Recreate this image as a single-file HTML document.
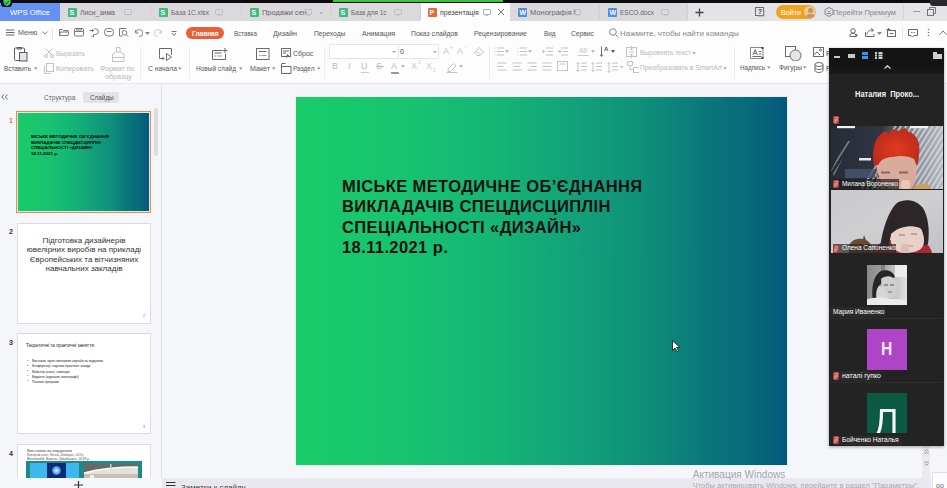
<!DOCTYPE html>
<html><head><meta charset="utf-8"><style>
*{margin:0;padding:0;box-sizing:border-box}
html,body{width:947px;height:488px;overflow:hidden;background:#f5f6fa;font-family:"Liberation Sans",sans-serif;color:#333;position:relative}
.a{position:absolute}
.t{position:absolute;white-space:nowrap;line-height:1}
.ic{position:absolute;top:7px;width:9px;height:10px;border-radius:1px;color:#fff;font-size:8px;font-weight:bold;text-align:center;line-height:10px}
.ic.s{background:#3fbb80}.ic.p{background:#ea6540}.ic.w{background:#4d8ce8}
.mon{position:absolute;top:8px;width:8px;height:6px;border:1px solid #c4c4c8;border-radius:1px}
.stxt{position:absolute;left:46px;font-weight:bold;font-size:16.5px;color:#111;letter-spacing:0.4px;white-space:nowrap;line-height:1}
</style></head><body>
<div class="a" style="left:0px;top:0px;width:947px;height:3px;background:#0c0c0c;"></div>
<div class="a" style="left:333px;top:0px;width:170px;height:2px;background:#3cc43c;"></div>
<div class="a" style="left:0px;top:3px;width:947px;height:18px;background:#e4e3e8;"></div>
<div class="a" style="left:0px;top:3px;width:60px;height:18px;background:#6690f2;"></div>
<div class="a" style="left:1px;top:0px;width:11px;height:7px;background:#0a1428;border-radius:0 0 3px 3px"></div>
<svg class="a" style="left:2.5px;top:0px;" width="8" height="6" viewBox="0 0 8 6" fill="none" stroke="#666" stroke-width="1"><path d="M0.5 0H7.5V2.5C7.5 4 5.5 5.5 4 6C2.5 5.5 0.5 4 0.5 2.5Z" fill="#3ccf5a" stroke="none"/><path d="M2 2.5L3.5 3.8 6 1" stroke="#0a4a1a" stroke-width="1" fill="none"/></svg>
<div class="t" style="left:10px;top:9.04px;font-size:7.2px;color:#fff;font-weight:normal;transform:scale(1.0789,1.0000);transform-origin:0 0;">WPS Office</div>
<div class="a" style="left:60px;top:3px;width:91px;height:18px;background:#dbd9de;"></div>
<div class="a" style="left:150px;top:5px;width:1px;height:14px;background:#cfcfd4;"></div>
<div class="a" style="left:151px;top:3px;width:91px;height:18px;background:#dbd9de;"></div>
<div class="a" style="left:241px;top:5px;width:1px;height:14px;background:#cfcfd4;"></div>
<div class="a" style="left:242px;top:3px;width:89px;height:18px;background:#dbd9de;"></div>
<div class="a" style="left:330px;top:5px;width:1px;height:14px;background:#cfcfd4;"></div>
<div class="a" style="left:331px;top:3px;width:90px;height:18px;background:#dbd9de;"></div>
<div class="a" style="left:420px;top:5px;width:1px;height:14px;background:#cfcfd4;"></div>
<div class="a" style="left:510px;top:3px;width:90px;height:18px;background:#dbd9de;"></div>
<div class="a" style="left:599px;top:5px;width:1px;height:14px;background:#cfcfd4;"></div>
<div class="a" style="left:600px;top:3px;width:88px;height:18px;background:#dbd9de;"></div>
<div class="a" style="left:687px;top:5px;width:1px;height:14px;background:#cfcfd4;"></div>
<div class="a" style="left:68px;top:8px;width:9px;height:9px;background:#3fbb80;border-radius:1px"></div>
<div class="t" style="left:69.5px;top:9.14px;font-size:7px;color:#fff;font-weight:bold;">S</div>
<div class="t" style="left:80px;top:9.04px;font-size:7.2px;color:#666;font-weight:normal;transform:scale(0.9550,1.0000);transform-origin:0 0;">Лиси_зима</div>
<svg class="a" style="left:124px;top:9px;" width="8" height="7" viewBox="0 0 8 7" fill="none" stroke="#c0c0c4" stroke-width="1"><rect x="0.5" y="0.5" width="7" height="5" rx="0.5"/><path d="M4 5.5v1.5M2.5 7h3"/></svg>
<div class="a" style="left:159px;top:8px;width:9px;height:9px;background:#3fbb80;border-radius:1px"></div>
<div class="t" style="left:160.5px;top:9.14px;font-size:7px;color:#fff;font-weight:bold;">S</div>
<div class="t" style="left:171px;top:9.04px;font-size:7.2px;color:#666;font-weight:normal;transform:scale(0.9144,1.0000);transform-origin:0 0;">База 1С.xlsx</div>
<svg class="a" style="left:215px;top:9px;" width="8" height="7" viewBox="0 0 8 7" fill="none" stroke="#c0c0c4" stroke-width="1"><rect x="0.5" y="0.5" width="7" height="5" rx="0.5"/><path d="M4 5.5v1.5M2.5 7h3"/></svg>
<div class="a" style="left:250px;top:8px;width:9px;height:9px;background:#3fbb80;border-radius:1px"></div>
<div class="t" style="left:251.5px;top:9.14px;font-size:7px;color:#fff;font-weight:bold;">S</div>
<div class="t" style="left:262px;top:9.04px;font-size:7.2px;color:#666;font-weight:normal;transform:scale(1.0310,1.0000);transform-origin:0 0;width:47px;overflow:hidden;">Продажи сен</div>
<svg class="a" style="left:304px;top:9px;" width="8" height="7" viewBox="0 0 8 7" fill="none" stroke="#c0c0c4" stroke-width="1"><rect x="0.5" y="0.5" width="7" height="5" rx="0.5"/><path d="M4 5.5v1.5M2.5 7h3"/></svg>
<div class="a" style="left:339px;top:8px;width:9px;height:9px;background:#3fbb80;border-radius:1px"></div>
<div class="t" style="left:340.5px;top:9.14px;font-size:7px;color:#fff;font-weight:bold;">S</div>
<div class="t" style="left:351px;top:9.04px;font-size:7.2px;color:#666;font-weight:normal;transform:scale(0.8907,1.0000);transform-origin:0 0;">База для 1с</div>
<svg class="a" style="left:394px;top:9px;" width="8" height="7" viewBox="0 0 8 7" fill="none" stroke="#c0c0c4" stroke-width="1"><rect x="0.5" y="0.5" width="7" height="5" rx="0.5"/><path d="M4 5.5v1.5M2.5 7h3"/></svg>
<div class="a" style="left:518px;top:8px;width:9px;height:9px;background:#4d8ce8;border-radius:1px"></div>
<div class="t" style="left:519.5px;top:9.14px;font-size:7px;color:#fff;font-weight:bold;">W</div>
<div class="t" style="left:530px;top:9.04px;font-size:7.2px;color:#666;font-weight:normal;transform:scale(1.0426,1.0000);transform-origin:0 0;width:48px;overflow:hidden;">Монографія І</div>
<svg class="a" style="left:573px;top:9px;" width="8" height="7" viewBox="0 0 8 7" fill="none" stroke="#c0c0c4" stroke-width="1"><rect x="0.5" y="0.5" width="7" height="5" rx="0.5"/><path d="M4 5.5v1.5M2.5 7h3"/></svg>
<div class="a" style="left:608px;top:8px;width:9px;height:9px;background:#4d8ce8;border-radius:1px"></div>
<div class="t" style="left:609.5px;top:9.14px;font-size:7px;color:#fff;font-weight:bold;">W</div>
<div class="t" style="left:620px;top:9.04px;font-size:7.2px;color:#666;font-weight:normal;transform:scale(0.9039,1.0000);transform-origin:0 0;">ESCO.docx</div>
<svg class="a" style="left:661px;top:9px;" width="8" height="7" viewBox="0 0 8 7" fill="none" stroke="#c0c0c4" stroke-width="1"><rect x="0.5" y="0.5" width="7" height="5" rx="0.5"/><path d="M4 5.5v1.5M2.5 7h3"/></svg>
<div class="a" style="left:421px;top:3px;width:89px;height:18px;background:#fdfdfe;"></div>
<div class="a" style="left:428px;top:8px;width:9px;height:9px;background:#ea6540;border-radius:1px"></div>
<div class="t" style="left:429.5px;top:9.14px;font-size:7px;color:#fff;font-weight:bold;">P</div>
<div class="t" style="left:440px;top:9.04px;font-size:7.2px;color:#444;font-weight:normal;transform:scale(0.9801,1.0000);transform-origin:0 0;">презентація</div>
<svg class="a" style="left:483px;top:9px;" width="8" height="7" viewBox="0 0 8 7" fill="none" stroke="#b0b0b4" stroke-width="1"><rect x="0.5" y="0.5" width="7" height="5" rx="0.5"/><path d="M4 5.5v1.5M2.5 7h3"/></svg>
<svg class="a" style="left:497px;top:8px;" width="8" height="8" viewBox="0 0 8 8" fill="none" stroke="#777" stroke-width="1"><path d="M1 1L7 7M7 1L1 7"/></svg>
<div class="t" style="left:320px;top:9.14px;font-size:7px;color:#aaa;font-weight:normal;">&#8226;</div>
<svg class="a" style="left:695px;top:8px;" width="9" height="9" viewBox="0 0 9 9" fill="none" stroke="#444" stroke-width="1.3"><path d="M4.5 0.5v8M0.5 4.5h8"/></svg>
<svg class="a" style="left:755px;top:7px;" width="10" height="10" viewBox="0 0 10 10" fill="none" stroke="#6a6a6a" stroke-width="1"><rect x="0.5" y="0.5" width="8" height="8"/><path d="M9 3v6H3" stroke="#999"/></svg>
<div class="t" style="left:758px;top:9.18px;font-size:6.5px;color:#333;font-weight:bold;">?</div>
<div class="a" style="left:776px;top:5px;width:40px;height:14px;background:#f0a31e;border-radius:7px"></div>
<div class="t" style="left:781px;top:8.70px;font-size:7.5px;color:#fff;font-weight:normal;transform:scale(0.9530,1.0000);transform-origin:0 0;">Войти</div>
<div class="a" style="left:804px;top:6px;width:12px;height:12px;border-radius:6px;background:#e8c8a0;overflow:hidden"><div class="a" style="left:3.5px;top:2px;width:5px;height:5px;border-radius:3px;background:#c9925c"></div><div class="a" style="left:1.5px;top:7.5px;width:9px;height:6px;border-radius:4px 4px 0 0;background:#c9925c"></div></div>
<svg class="a" style="left:824px;top:7px;" width="10" height="10" viewBox="0 0 10 10" fill="none" stroke="#888" stroke-width="1"><path d="M5 0.5L9 2.5V7L5 9.5L1 7V2.5Z"/><path d="M3 6.5h4M3.5 4l1.5 1 1.5-1"/></svg>
<div class="t" style="left:833px;top:9.04px;font-size:7.2px;color:#888;font-weight:normal;transform:scale(1.0302,1.0000);transform-origin:0 0;">Перейти Премиум</div>
<div class="a" style="left:903px;top:5px;width:1px;height:14px;background:#d4d4d8;"></div>
<svg class="a" style="left:913px;top:11px;" width="7" height="1" viewBox="0 0 7 1" fill="none" stroke="#999" stroke-width="1"><path d="M0 0.5h7"/></svg>
<svg class="a" style="left:927px;top:7px;" width="9" height="9" viewBox="0 0 9 9" fill="none" stroke="#777" stroke-width="1"><rect x="0.5" y="2.5" width="6" height="6"/><path d="M2.5 2.5V0.5h6v6h-2"/></svg>
<div class="a" style="left:930px;top:0px;width:17px;height:6px;background:#2a2a2a;border-radius:0 0 0 3px"></div>
<div class="a" style="left:0px;top:21px;width:947px;height:63px;background:#fdfdfe;"></div>
<div class="a" style="left:0px;top:83px;width:947px;height:1px;background:#e6e6ea;"></div>
<svg class="a" style="left:5.5px;top:29px;" width="9" height="7" viewBox="0 0 9 7" fill="none" stroke="#666" stroke-width="1"><path d="M0 1h8.5M0 3.5h8.5M0 6h8.5"/></svg>
<div class="t" style="left:17.7px;top:29.24px;font-size:7.2px;color:#555;font-weight:normal;transform:scale(0.9919,1.0000);transform-origin:0 0;">Меню</div>
<svg class="a" style="left:42px;top:31px;" width="6" height="4" viewBox="0 0 6 4" fill="none" stroke="#888" stroke-width="1"><path d="M0.5 0.5L3 3L5.5 0.5"/></svg>
<div class="a" style="left:52px;top:28px;width:1px;height:11px;background:#e2e2e6;"></div>
<svg class="a" style="left:58.5px;top:29px;" width="10" height="8" viewBox="0 0 10 8" fill="none" stroke="#7a7a7a" stroke-width="1"><path d="M0.5 6.5V0.5h3l1 1h4.5v1.5"/><path d="M0.5 6.5l1-3.5h8.5l-1 3.5z"/></svg>
<svg class="a" style="left:73.5px;top:28px;" width="10" height="9" viewBox="0 0 10 9" fill="none" stroke="#7a7a7a" stroke-width="1"><rect x="0.5" y="0.5" width="9" height="7.5" rx="1"/><path d="M0.5 3.5h9M2.5 0.5v1.5h5V0.5"/></svg>
<svg class="a" style="left:89px;top:28px;" width="10" height="9" viewBox="0 0 10 9" fill="none" stroke="#7a7a7a" stroke-width="1"><path d="M0.5 2.5h4M3 1l1.5 1.5L3 4"/><path d="M5 0.8h1.5a2.8 2.8 0 0 1 0 5.6H4.5v2.5c-1 0-1.8-.3-1.8-1.2"/></svg>
<svg class="a" style="left:103.5px;top:28px;" width="10" height="9" viewBox="0 0 10 9" fill="none" stroke="#7a7a7a" stroke-width="1"><rect x="0.5" y="0.5" width="9" height="7.5" rx="3.2"/><path d="M2.5 3.5h5"/></svg>
<svg class="a" style="left:118.5px;top:28px;" width="10" height="9" viewBox="0 0 10 9" fill="none" stroke="#7a7a7a" stroke-width="1"><path d="M7.5 0.5h-7v7.5h3"/><circle cx="5.5" cy="4.8" r="2.3"/><path d="M7.2 6.5L9 8.5"/></svg>
<svg class="a" style="left:134px;top:29px;" width="9" height="8" viewBox="0 0 9 8" fill="none" stroke="#888" stroke-width="1"><path d="M1.5 1v3h3"/><path d="M1.8 4A3.5 3.5 0 1 1 5 7.5"/></svg>
<svg class="a" style="left:145px;top:32px;" width="5" height="3" viewBox="0 0 5 3" fill="none" stroke="#666" stroke-width="1"><path d="M0 0h5L2.5 3z" fill="#888" stroke="none"/></svg>
<svg class="a" style="left:154px;top:29px;" width="9" height="8" viewBox="0 0 9 8" fill="none" stroke="#ccc" stroke-width="1"><path d="M7.5 1v3h-3"/><path d="M7.2 4A3.5 3.5 0 1 0 4 7.5"/></svg>
<svg class="a" style="left:171px;top:31px;" width="6" height="5" viewBox="0 0 6 5" fill="none" stroke="#777" stroke-width="1"><path d="M0.5 0.5h5M1 2l2 2.5L5 2"/></svg>
<div class="a" style="left:186px;top:27px;width:38px;height:12px;background:#e8603a;border-radius:6px"></div>
<div class="t" style="left:191.7px;top:29.54px;font-size:7.2px;color:#fff;font-weight:bold;transform:scale(0.9085,1.0000);transform-origin:0 0;">Главная</div>
<div class="t" style="left:234px;top:29.54px;font-size:7.2px;color:#555;font-weight:normal;transform:scale(0.8595,1.0000);transform-origin:0 0;">Вставка</div>
<div class="t" style="left:273px;top:29.54px;font-size:7.2px;color:#555;font-weight:normal;transform:scale(0.9917,1.0000);transform-origin:0 0;">Дизайн</div>
<div class="t" style="left:313.6px;top:29.54px;font-size:7.2px;color:#555;font-weight:normal;transform:scale(0.9299,1.0000);transform-origin:0 0;">Переходы</div>
<div class="t" style="left:361.8px;top:29.54px;font-size:7.2px;color:#555;font-weight:normal;transform:scale(0.9823,1.0000);transform-origin:0 0;">Анимация</div>
<div class="t" style="left:411px;top:29.54px;font-size:7.2px;color:#555;font-weight:normal;transform:scale(0.9482,1.0000);transform-origin:0 0;">Показ слайдов</div>
<div class="t" style="left:474px;top:29.54px;font-size:7.2px;color:#555;font-weight:normal;transform:scale(0.9534,1.0000);transform-origin:0 0;">Рецензирование</div>
<div class="t" style="left:543.5px;top:29.54px;font-size:7.2px;color:#555;font-weight:normal;transform:scale(0.8829,1.0000);transform-origin:0 0;">Вид</div>
<div class="t" style="left:571px;top:29.54px;font-size:7.2px;color:#555;font-weight:normal;transform:scale(0.9329,1.0000);transform-origin:0 0;">Сервис</div>
<svg class="a" style="left:609px;top:28px;" width="10" height="10" viewBox="0 0 10 10" fill="none" stroke="#888" stroke-width="1"><circle cx="4" cy="4" r="3.3"/><path d="M6.5 6.5L9.5 9.5"/></svg>
<div class="t" style="left:620px;top:29.54px;font-size:7.2px;color:#888;font-weight:normal;transform:scale(1.1086,1.0000);transform-origin:0 0;">Нажмите, чтобы найти команды</div>
<svg class="a" style="left:849px;top:28px;" width="9" height="9" viewBox="0 0 9 9" fill="none" stroke="#6a6a6a" stroke-width="1"><circle cx="4" cy="3" r="2.3"/><path d="M0.8 8.5c0-2.5 1.5-3.5 3.2-3.5s3.2 1 3.2 3.5z"/><path d="M7.5 6v2.5M6.3 7.2h2.4"/></svg>
<svg class="a" style="left:865px;top:28px;" width="10" height="9" viewBox="0 0 10 9" fill="none" stroke="#6a6a6a" stroke-width="1"><path d="M0.5 4v4.5h8.5V6"/><path d="M2 6.5c0-3 2.5-4.5 6-4.5M6 0.5L8.5 2 6.5 4"/></svg>
<svg class="a" style="left:877px;top:32px;" width="5" height="3" viewBox="0 0 5 3" fill="none" stroke="#666" stroke-width="1"><path d="M0 0h5L2.5 3z" fill="#888" stroke="none"/></svg>
<svg class="a" style="left:886px;top:28px;" width="10" height="9" viewBox="0 0 10 9" fill="none" stroke="#6a6a6a" stroke-width="1"><path d="M0.5 1.5h4M2.5 0v3"/><rect x="1.5" y="2.5" width="8" height="6"/><path d="M3.5 5.5h4"/></svg>
<div class="a" style="left:901.5px;top:27px;width:1px;height:12px;background:#e4e4e8;"></div>
<svg class="a" style="left:908px;top:29px;" width="10" height="8" viewBox="0 0 10 8" fill="none" stroke="#666" stroke-width="1"><path d="M0.5 0.5h9v6H6L4.5 8 3 6.5H0.5z"/><path d="M3 3.5h.8M4.6 3.5h.8M6.2 3.5h.8"/></svg>
<svg class="a" style="left:927px;top:28px;" width="3" height="9" viewBox="0 0 3 9" fill="none" stroke="none" stroke-width="1"><circle cx="1.5" cy="1.5" r="0.8" fill="#777"/><circle cx="1.5" cy="4.5" r="0.8" fill="#777"/><circle cx="1.5" cy="7.5" r="0.8" fill="#777"/></svg>
<svg class="a" style="left:939px;top:30px;" width="8" height="5" viewBox="0 0 8 5" fill="none" stroke="#777" stroke-width="1"><path d="M0.5 4.5L4 1L7.5 4.5"/></svg>
<svg class="a" style="left:14px;top:46.5px;" width="14" height="15" viewBox="0 0 14 15" fill="none" stroke="#5a5a5a" stroke-width="1"><rect x="0.5" y="1" width="10" height="12.5" rx="1"/><path d="M3 1.5V0.5h4.5v1.5h-4.5"/><rect x="5.5" y="5.5" width="7.5" height="8.5" fill="#e4e4ee"/></svg>
<div class="t" style="left:4px;top:65.24px;font-size:7.2px;color:#555;font-weight:normal;transform:scale(0.8847,1.0000);transform-origin:0 0;">Вставить</div>
<svg class="a" style="left:33.5px;top:67px;" width="4" height="3" viewBox="0 0 4 3" fill="none" stroke="#666" stroke-width="1"><path d="M0 0.5h3.5L1.75 2.7z" fill="#888" stroke="none"/></svg>
<svg class="a" style="left:44px;top:48px;" width="10" height="10" viewBox="0 0 10 10" fill="none" stroke="#c2c2c2" stroke-width="1"><path d="M1.5 0.5L8 7M8.5 0.5L2 7"/><circle cx="2" cy="8" r="1.5"/><circle cx="8" cy="8" r="1.5"/></svg>
<div class="t" style="left:55.7px;top:49.84px;font-size:7.2px;color:#b8b8b8;font-weight:normal;transform:scale(0.8994,1.0000);transform-origin:0 0;">Вырезать</div>
<svg class="a" style="left:44px;top:63px;" width="10" height="11" viewBox="0 0 10 11" fill="none" stroke="#c2c2c2" stroke-width="1"><rect x="2.5" y="0.5" width="7" height="8"/><path d="M0.5 2.5v8h6"/></svg>
<div class="t" style="left:55.7px;top:65.24px;font-size:7.2px;color:#b8b8b8;font-weight:normal;transform:scale(0.9803,1.0000);transform-origin:0 0;">Копировать</div>
<svg class="a" style="left:112px;top:46.5px;" width="13" height="15" viewBox="0 0 13 15" fill="none" stroke="#c2c2c2" stroke-width="1"><path d="M4.5 5V0.5h3.5V5"/><path d="M4.5 5L0.5 7V14.5h11.5V7L8 5z"/><path d="M0.5 10.5h11.5"/></svg>
<div class="t" style="left:99.6px;top:65.24px;font-size:7.2px;color:#b8b8b8;font-weight:normal;transform:scale(0.9696,1.0000);transform-origin:0 0;">Формат по</div>
<div class="t" style="left:104.7px;top:72.74px;font-size:7.2px;color:#b8b8b8;font-weight:normal;transform:scale(0.9971,1.0000);transform-origin:0 0;">образцу</div>
<div class="a" style="left:140px;top:47px;width:1px;height:32px;background:#ececf0;"></div>
<svg class="a" style="left:158.5px;top:47.5px;" width="14" height="13" viewBox="0 0 14 13" fill="none" stroke="#6a6a6a" stroke-width="1"><path d="M0.5 7.5V0.5h12v6.5"/><path d="M7.5 5.5v7l5-3.5z"/><path d="M0.5 7.5v3h4.5M3.5 9l1.5 1.5L3.5 12"/></svg>
<div class="t" style="left:148px;top:65.24px;font-size:7.2px;color:#555;font-weight:normal;transform:scale(0.9361,1.0000);transform-origin:0 0;">С начала</div>
<svg class="a" style="left:178px;top:67px;" width="4" height="3" viewBox="0 0 4 3" fill="none" stroke="#666" stroke-width="1"><path d="M0 0.5h3.5L1.75 2.7z" fill="#888" stroke="none"/></svg>
<div class="a" style="left:189px;top:47px;width:1px;height:32px;background:#ececf0;"></div>
<svg class="a" style="left:211.5px;top:47.5px;" width="16" height="12" viewBox="0 0 16 12" fill="none" stroke="#6a6a6a" stroke-width="1"><path d="M10 2.5H0.5v9h13V6"/><path d="M2.5 5h7"/><path d="M2.5 8h1.5M5 8h5" stroke="#999"/><path d="M13 0v5M10.5 2.5h5"/></svg>
<div class="t" style="left:196px;top:65.24px;font-size:7.2px;color:#555;font-weight:normal;transform:scale(0.9039,1.0000);transform-origin:0 0;">Новый слайд</div>
<svg class="a" style="left:239px;top:67px;" width="4" height="3" viewBox="0 0 4 3" fill="none" stroke="#666" stroke-width="1"><path d="M0 0.5h3.5L1.75 2.7z" fill="#888" stroke="none"/></svg>
<svg class="a" style="left:255.5px;top:48px;" width="14" height="12" viewBox="0 0 14 12" fill="none" stroke="#6a6a6a" stroke-width="1"><rect x="0.5" y="0.5" width="12.5" height="11"/><path d="M3 3.5h7.5"/><path d="M3 7.5h1.5M5.5 7.5h5" stroke="#999"/></svg>
<div class="t" style="left:249.8px;top:65.24px;font-size:7.2px;color:#555;font-weight:normal;transform:scale(0.9815,1.0000);transform-origin:0 0;">Макет</div>
<svg class="a" style="left:272px;top:67px;" width="4" height="3" viewBox="0 0 4 3" fill="none" stroke="#666" stroke-width="1"><path d="M0 0.5h3.5L1.75 2.7z" fill="#888" stroke="none"/></svg>
<svg class="a" style="left:281px;top:48px;" width="10" height="10" viewBox="0 0 10 10" fill="none" stroke="#6a6a6a" stroke-width="1"><rect x="0.5" y="0.5" width="9" height="8"/><path d="M2 3h6M2 5h3"/><path d="M5 9.5l1.5-2.5 2 2" stroke-width="1.2"/></svg>
<div class="t" style="left:292.6px;top:49.84px;font-size:7.2px;color:#555;font-weight:normal;transform:scale(0.9746,1.0000);transform-origin:0 0;">Сброс</div>
<svg class="a" style="left:281px;top:63px;" width="11" height="11" viewBox="0 0 11 11" fill="none" stroke="#6a6a6a" stroke-width="1"><path d="M0.5 0.5h4M0.5 2.5v0"/><path d="M0.5 3.5h9.5v7H0.5z"/><path d="M0.5 1v2.5"/></svg>
<div class="t" style="left:293px;top:65.24px;font-size:7.2px;color:#555;font-weight:normal;transform:scale(0.9035,1.0000);transform-origin:0 0;">Раздел</div>
<svg class="a" style="left:317px;top:67px;" width="4" height="3" viewBox="0 0 4 3" fill="none" stroke="#666" stroke-width="1"><path d="M0 0.5h3.5L1.75 2.7z" fill="#888" stroke="none"/></svg>
<div class="a" style="left:324px;top:47px;width:1px;height:32px;background:#ececf0;"></div>
<div class="a" style="left:328.5px;top:44px;width:70px;height:14.5px;background:#fff;border:1px solid #e4e4e8"></div>
<div class="a" style="left:398px;top:44px;width:41px;height:14.5px;background:#fff;border:1px solid #e4e4e8"></div>
<svg class="a" style="left:392px;top:51px;" width="4" height="2" viewBox="0 0 4 2" fill="none" stroke="#666" stroke-width="1"><path d="M0 0h4L2 2z" fill="#aaa" stroke="none"/></svg>
<svg class="a" style="left:433px;top:51px;" width="4" height="2" viewBox="0 0 4 2" fill="none" stroke="#666" stroke-width="1"><path d="M0 0h4L2 2z" fill="#aaa" stroke="none"/></svg>
<div class="t" style="left:400px;top:48.14px;font-size:7px;color:#444;font-weight:normal;">0</div>
<div class="t" style="left:443px;top:47.18px;font-size:9px;color:#c4c4c4;font-weight:normal;">A</div>
<div class="t" style="left:449.5px;top:45.10px;font-size:10.0px;color:#c4c4c4;font-weight:normal;transform:scale(0.5000,0.5000);transform-origin:0 0;">+</div>
<div class="t" style="left:457px;top:47.18px;font-size:9px;color:#c4c4c4;font-weight:normal;">A</div>
<div class="t" style="left:463.5px;top:45.10px;font-size:10.0px;color:#c4c4c4;font-weight:normal;transform:scale(0.5000,0.5000);transform-origin:0 0;">-</div>
<svg class="a" style="left:474px;top:47px;" width="10" height="9" viewBox="0 0 10 9" fill="none" stroke="#c2c2c2" stroke-width="1"><path d="M5 0.5L9.5 5 6 8.5H3L0.5 6z"/><path d="M2.5 4L6 7.5"/></svg>
<div class="t" style="left:332px;top:62.28px;font-size:9px;color:#bbb;font-weight:normal;">B</div>
<div class="t" style="left:348px;top:62.28px;font-size:9px;color:#bbb;font-weight:normal;font-style:italic">I</div>
<div class="t" style="left:361px;top:62.28px;font-size:9px;color:#bbb;font-weight:normal;">U</div>
<div class="a" style="left:361px;top:72px;width:8px;height:1px;background:#ccc;"></div>
<div class="t" style="left:376px;top:62.28px;font-size:9px;color:#bbb;font-weight:normal;">S</div>
<div class="a" style="left:375.5px;top:66px;width:8px;height:1px;background:#bbb;"></div>
<div class="t" style="left:391px;top:62.28px;font-size:9px;color:#bbb;font-weight:normal;">A</div>
<div class="a" style="left:390.5px;top:71.5px;width:8px;height:2px;background:#999;"></div>
<svg class="a" style="left:401px;top:65px;" width="4" height="3" viewBox="0 0 4 3" fill="none" stroke="#666" stroke-width="1"><path d="M0 0h4L2 3z" fill="#bbb" stroke="none"/></svg>
<div class="t" style="left:411px;top:62.28px;font-size:9px;color:#ccc;font-weight:normal;">X</div>
<div class="t" style="left:417.5px;top:59.60px;font-size:10.0px;color:#ccc;font-weight:normal;transform:scale(0.5000,0.5000);transform-origin:0 0;">2</div>
<div class="t" style="left:426px;top:62.28px;font-size:9px;color:#ccc;font-weight:normal;">X</div>
<div class="t" style="left:432.5px;top:67.60px;font-size:10.0px;color:#ccc;font-weight:normal;transform:scale(0.5000,0.5000);transform-origin:0 0;">2</div>
<svg class="a" style="left:446px;top:61px;" width="12" height="12" viewBox="0 0 12 12" fill="none" stroke="#c2c2c2" stroke-width="1"><path d="M2 8L7.5 2.5 10 5 4.5 10.5H2z"/><path d="M0.5 11.5h11"/></svg>
<svg class="a" style="left:459px;top:65px;" width="4" height="3" viewBox="0 0 4 3" fill="none" stroke="#666" stroke-width="1"><path d="M0 0h4L2 3z" fill="#bbb" stroke="none"/></svg>
<div class="a" style="left:489px;top:47px;width:1px;height:32px;background:#ececf0;"></div>
<svg class="a" style="left:494px;top:47px;" width="10" height="9" viewBox="0 0 10 9" fill="none" stroke="#c2c2c2" stroke-width="1"><path d="M3 1h7M3 4.5h7M3 8h7"/><path d="M0.5 1h1M0.5 4.5h1M0.5 8h1"/></svg>
<svg class="a" style="left:505px;top:50px;" width="4" height="3" viewBox="0 0 4 3" fill="none" stroke="#666" stroke-width="1"><path d="M0 0h4L2 3z" fill="#bbb" stroke="none"/></svg>
<svg class="a" style="left:517px;top:47px;" width="10" height="9" viewBox="0 0 10 9" fill="none" stroke="#c2c2c2" stroke-width="1"><path d="M3 1h7M3 4.5h7M3 8h7"/><path d="M0.5 1h1M0.5 4.5h1M0.5 8h1"/></svg>
<svg class="a" style="left:528px;top:50px;" width="4" height="3" viewBox="0 0 4 3" fill="none" stroke="#666" stroke-width="1"><path d="M0 0h4L2 3z" fill="#bbb" stroke="none"/></svg>
<svg class="a" style="left:542px;top:47px;" width="11" height="9" viewBox="0 0 11 9" fill="none" stroke="#c2c2c2" stroke-width="1"><path d="M4 1h7M6 4.5h5M4 8h7"/><path d="M3 4.5H0.5M2 3L0.5 4.5 2 6"/></svg>
<svg class="a" style="left:557px;top:47px;" width="11" height="9" viewBox="0 0 11 9" fill="none" stroke="#c2c2c2" stroke-width="1"><path d="M4 1h7M6 4.5h5M4 8h7"/><path d="M0.5 4.5H4M2.5 3L4 4.5 2.5 6"/></svg>
<div class="t" style="left:579px;top:48.38px;font-size:6.5px;color:#c8c8c8;font-weight:normal;">AB</div>
<div class="a" style="left:578px;top:55px;width:11px;height:1px;background:#ccc;"></div>
<svg class="a" style="left:591px;top:50px;" width="4" height="3" viewBox="0 0 4 3" fill="none" stroke="#666" stroke-width="1"><path d="M0 0h4L2 3z" fill="#bbb" stroke="none"/></svg>
<svg class="a" style="left:600px;top:46px;" width="10" height="12" viewBox="0 0 10 12" fill="none" stroke="#6a6a6a" stroke-width="1"><path d="M1.5 0.5v10M0 8.5l1.5 2 1.5-2"/></svg>
<div class="t" style="left:604px;top:46.12px;font-size:6px;color:#555;font-weight:bold;">A</div>
<svg class="a" style="left:611px;top:50px;" width="4" height="3" viewBox="0 0 4 3" fill="none" stroke="#666" stroke-width="1"><path d="M0 0h4L2 3z" fill="#555" stroke="none"/></svg>
<svg class="a" style="left:626px;top:46px;" width="12" height="12" viewBox="0 0 12 12" fill="none" stroke="#c2c2c2" stroke-width="1"><rect x="0.5" y="1.5" width="10" height="9"/><path d="M5.5 0v4M4 2.5l1.5 1.5L7 2.5M5.5 12V8M4 9.5l1.5-1.5L7 9.5M3 6h5"/></svg>
<div class="t" style="left:640px;top:49.14px;font-size:7.2px;color:#b8b8b8;font-weight:normal;transform:scale(0.9094,1.0000);transform-origin:0 0;">Выровнять текст</div>
<svg class="a" style="left:692px;top:52px;" width="4" height="3" viewBox="0 0 4 3" fill="none" stroke="#666" stroke-width="1"><path d="M0 0h4L2 3z" fill="#bbb" stroke="none"/></svg>
<svg class="a" style="left:497px;top:62px;" width="10" height="9" viewBox="0 0 10 9" fill="none" stroke="#c2c2c2" stroke-width="1"><path d="M0.5 1h9M0.5 4.5h6M0.5 8h9"/></svg>
<svg class="a" style="left:512px;top:62px;" width="10" height="9" viewBox="0 0 10 9" fill="none" stroke="#c2c2c2" stroke-width="1"><path d="M0.5 1h9M2 4.5h6M0.5 8h9"/></svg>
<svg class="a" style="left:527px;top:62px;" width="10" height="9" viewBox="0 0 10 9" fill="none" stroke="#c2c2c2" stroke-width="1"><path d="M0.5 1h9M3.5 4.5h6M0.5 8h9"/></svg>
<svg class="a" style="left:542px;top:62px;" width="10" height="9" viewBox="0 0 10 9" fill="none" stroke="#c2c2c2" stroke-width="1"><path d="M0.5 1h9M0.5 4.5h9M0.5 8h9"/></svg>
<svg class="a" style="left:557px;top:61px;" width="11" height="10" viewBox="0 0 11 10" fill="none" stroke="#c2c2c2" stroke-width="1"><rect x="0.5" y="0.5" width="10" height="9"/><path d="M2.5 3h6"/></svg>
<svg class="a" style="left:576px;top:61.5px;" width="11" height="10" viewBox="0 0 11 10" fill="none" stroke="#c2c2c2" stroke-width="1"><path d="M5 1h6M5 4.5h6M5 8h6M2 0.5v9M0.5 2L2 0.5 3.5 2M0.5 8L2 9.5 3.5 8"/></svg>
<svg class="a" style="left:591px;top:61.5px;" width="11" height="10" viewBox="0 0 11 10" fill="none" stroke="#c2c2c2" stroke-width="1"><path d="M5 1h6M5 4.5h6M5 8h6M2 0.5v9M0.5 2L2 0.5 3.5 2M0.5 8L2 9.5 3.5 8"/></svg>
<svg class="a" style="left:606.5px;top:61.5px;" width="11" height="11" viewBox="0 0 11 11" fill="none" stroke="#c2c2c2" stroke-width="1"><path d="M5 1h6M5 4.5h6M5 8h6M2 0.5v10M0.5 2L2 0.5 3.5 2M0.5 9L2 10.5 3.5 9"/></svg>
<svg class="a" style="left:619.5px;top:65.5px;" width="4" height="3" viewBox="0 0 4 3" fill="none" stroke="#666" stroke-width="1"><path d="M0 0h3.5L1.75 2.5z" fill="#bbb" stroke="none"/></svg>
<svg class="a" style="left:627px;top:61px;" width="12" height="12" viewBox="0 0 12 12" fill="none" stroke="#c2c2c2" stroke-width="1"><path d="M0.5 0.5h5v4h-5zM3 4.5v4h3.5"/><rect x="6.5" y="6.5" width="6" height="5"/></svg>
<div class="t" style="left:640px;top:64.34px;font-size:7.2px;color:#b8b8b8;font-weight:normal;transform:scale(0.9390,1.0000);transform-origin:0 0;">Преобразовать в SmartArt</div>
<svg class="a" style="left:723px;top:67px;" width="4" height="3" viewBox="0 0 4 3" fill="none" stroke="#666" stroke-width="1"><path d="M0 0h4L2 3z" fill="#bbb" stroke="none"/></svg>
<div class="a" style="left:734px;top:47px;width:1px;height:32px;background:#ececf0;"></div>
<svg class="a" style="left:749.5px;top:47px;" width="14" height="12" viewBox="0 0 14 12" fill="none" stroke="#6a6a6a" stroke-width="1"><path d="M0.5 0.5v11M0.5 0.5h12.5M0.5 11.5h12.5M13 0.5v11" stroke="#888"/><path d="M3 8L5.2 2.5 7.4 8M3.8 6.2h2.8M8.8 4.5h2.5M8.8 7h2.5M2.5 9.5h9"/><rect x="11.5" y="0" width="2" height="2" fill="#444" stroke="none"/><rect x="11.5" y="10" width="2" height="2" fill="#444" stroke="none"/></svg>
<div class="t" style="left:740px;top:63.84px;font-size:7.2px;color:#555;font-weight:normal;transform:scale(0.8718,1.0000);transform-origin:0 0;">Надпись</div>
<svg class="a" style="left:767px;top:66px;" width="4" height="3" viewBox="0 0 4 3" fill="none" stroke="#666" stroke-width="1"><path d="M0 0.5h3.5L1.75 2.7z" fill="#888" stroke="none"/></svg>
<svg class="a" style="left:785px;top:46px;" width="17" height="15" viewBox="0 0 17 15" fill="none" stroke="#6a6a6a" stroke-width="1"><rect x="0.5" y="0.5" width="10" height="10"/><circle cx="10.5" cy="9.5" r="5.5" fill="#e4e4ea"/></svg>
<div class="t" style="left:778.8px;top:63.84px;font-size:7.2px;color:#555;font-weight:normal;transform:scale(0.9267,1.0000);transform-origin:0 0;">Фигуры</div>
<svg class="a" style="left:803px;top:66px;" width="4" height="3" viewBox="0 0 4 3" fill="none" stroke="#666" stroke-width="1"><path d="M0 0.5h3.5L1.75 2.7z" fill="#888" stroke="none"/></svg>
<svg class="a" style="left:813px;top:47px;" width="11" height="10" viewBox="0 0 11 10" fill="none" stroke="#6a6a6a" stroke-width="1"><rect x="0.5" y="0.5" width="10" height="9"/><path d="M0.5 8L4 5l3 3"/><circle cx="7.5" cy="3" r="1"/></svg>
<div class="t" style="left:826px;top:49.94px;font-size:7px;color:#444;font-weight:normal;">Р</div>
<svg class="a" style="left:814px;top:62px;" width="10" height="11" viewBox="0 0 10 11" fill="none" stroke="#6a6a6a" stroke-width="1"><ellipse cx="5" cy="2.5" rx="4" ry="2"/><path d="M1 2.5v6c0 1 2 2 4 2s4-1 4-2v-6M1 5.5c0 1 2 2 4 2s4-1 4-2"/></svg>
<div class="t" style="left:826px;top:65.34px;font-size:7px;color:#444;font-weight:normal;">Р</div>
<div class="a" style="left:0px;top:84px;width:161px;height:394px;background:#f5f6fa;"></div>
<div class="a" style="left:161px;top:84px;width:1px;height:394px;background:#e0e0e5;"></div>
<svg class="a" style="left:1px;top:94px;" width="7" height="6" viewBox="0 0 7 6" fill="none" stroke="#666" stroke-width="1"><path d="M3 0.5L0.8 3 3 5.5M6.5 0.5L4.3 3 6.5 5.5"/></svg>
<div class="t" style="left:44px;top:94.04px;font-size:7.2px;color:#666;font-weight:normal;transform:scale(0.9193,1.0000);transform-origin:0 0;">Структура</div>
<div class="a" style="left:83px;top:92px;width:36px;height:11px;background:#e2e2e7;border-radius:2px"></div>
<div class="t" style="left:89.8px;top:94.04px;font-size:7.2px;color:#555;font-weight:normal;transform:scale(0.8843,1.0000);transform-origin:0 0;">Слайды</div>
<div class="a" style="left:154px;top:108px;width:4px;height:48px;background:#dcdce0;border-radius:2px"></div>
<div class="a" style="left:15.5px;top:110.5px;width:135.5px;height:102px;background:#d8f0e4;border:1px solid #e88a58"></div>
<div class="a" style="left:17.5px;top:112.5px;width:131.5px;height:98px;background:linear-gradient(90deg,rgb(25,203,105) 0%,rgb(24,196,112) 21%,rgb(20,180,118) 41.5%,rgb(17,155,122) 62%,rgb(14,142,122) 72%,rgb(10,122,122) 82%,rgb(8,105,122) 92.5%,rgb(5,88,125) 100%);"></div>
<div class="t" style="left:9px;top:117.24px;font-size:7px;color:#e8763f;font-weight:bold;">1</div>
<div class="t" style="left:31px;top:134.39px;font-size:10.0px;color:#000;font-weight:bold;transform:scale(0.4400,0.4400);transform-origin:0 0;letter-spacing:0.05px">МІСЬКЕ МЕТОДИЧНЕ ОБ’ЄДНАННЯ</div>
<div class="t" style="left:31px;top:139.84px;font-size:10.0px;color:#000;font-weight:bold;transform:scale(0.4400,0.4400);transform-origin:0 0;letter-spacing:0.05px">ВИКЛАДАЧІВ СПЕЦДИСЦИПЛІН</div>
<div class="t" style="left:31px;top:145.29px;font-size:10.0px;color:#000;font-weight:bold;transform:scale(0.4400,0.4400);transform-origin:0 0;letter-spacing:0.05px">СПЕЦІАЛЬНОСТІ «ДИЗАЙН»</div>
<div class="t" style="left:31px;top:150.74px;font-size:10.0px;color:#000;font-weight:bold;transform:scale(0.4400,0.4400);transform-origin:0 0;letter-spacing:0.05px">18.11.2021 р.</div>
<div class="a" style="left:16.5px;top:222.5px;width:134px;height:101px;background:#ffffff;border:1px solid #dcdce0"></div>
<div class="t" style="left:9px;top:228.34px;font-size:7px;color:#333;font-weight:bold;">2</div>
<div class="t" style="left:17px;width:134px;text-align:center;top:236.90px;font-size:8px;color:#333">Підготовка дизайнерів</div>
<div class="t" style="left:17px;width:134px;text-align:center;top:246.35px;font-size:8px;color:#333">ювелірних виробів на прикладі</div>
<div class="t" style="left:17px;width:134px;text-align:center;top:255.80px;font-size:8px;color:#333">Європейських та вітчизняних</div>
<div class="t" style="left:17px;width:134px;text-align:center;top:265.25px;font-size:8px;color:#333">навчальних закладів</div>
<div class="t" style="left:142.5px;top:314.32px;font-size:10.0px;color:#666;font-weight:normal;transform:scale(0.3500,0.3500);transform-origin:0 0;">2</div>
<div class="a" style="left:16.5px;top:333px;width:134px;height:100.5px;background:#ffffff;border:1px solid #dcdce0"></div>
<div class="t" style="left:9px;top:339.34px;font-size:7px;color:#333;font-weight:bold;">3</div>
<div class="t" style="left:26px;top:343.02px;font-size:10.0px;color:#222;font-weight:normal;transform:scale(0.4554,0.4550);transform-origin:0 0;">Теоретичні та практичні заняття:</div>
<div class="t" style="left:27px;top:359.02px;font-size:10.0px;color:#333;font-weight:normal;transform:scale(0.3500,0.3500);transform-origin:0 0;">&#8226;</div>
<div class="t" style="left:31.5px;top:359.36px;font-size:10.0px;color:#222;font-weight:normal;transform:scale(0.3200,0.3200);transform-origin:0 0;">Виставки, музеї ювелірних виробів за кордоном</div>
<div class="t" style="left:27px;top:364.12px;font-size:10.0px;color:#333;font-weight:normal;transform:scale(0.3500,0.3500);transform-origin:0 0;">&#8226;</div>
<div class="t" style="left:31.5px;top:364.46px;font-size:10.0px;color:#222;font-weight:normal;transform:scale(0.3200,0.3200);transform-origin:0 0;">Конференції, науково-практичні заходи</div>
<div class="t" style="left:27px;top:369.22px;font-size:10.0px;color:#333;font-weight:normal;transform:scale(0.3500,0.3500);transform-origin:0 0;">&#8226;</div>
<div class="t" style="left:31.5px;top:369.56px;font-size:10.0px;color:#222;font-weight:normal;transform:scale(0.3200,0.3200);transform-origin:0 0;">Майстер-класи, семінари</div>
<div class="t" style="left:27px;top:374.32px;font-size:10.0px;color:#333;font-weight:normal;transform:scale(0.3500,0.3500);transform-origin:0 0;">&#8226;</div>
<div class="t" style="left:31.5px;top:374.66px;font-size:10.0px;color:#222;font-weight:normal;transform:scale(0.3200,0.3200);transform-origin:0 0;">Видання (журнали, монографії)</div>
<div class="t" style="left:27px;top:379.42px;font-size:10.0px;color:#333;font-weight:normal;transform:scale(0.3500,0.3500);transform-origin:0 0;">&#8226;</div>
<div class="t" style="left:31.5px;top:379.76px;font-size:10.0px;color:#222;font-weight:normal;transform:scale(0.3200,0.3200);transform-origin:0 0;">Планові програми</div>
<div class="t" style="left:142.5px;top:424.82px;font-size:10.0px;color:#666;font-weight:normal;transform:scale(0.3500,0.3500);transform-origin:0 0;">3</div>
<div class="a" style="left:16.5px;top:444px;width:134px;height:40px;background:#ffffff;border:1px solid #dcdce0"></div>
<div class="t" style="left:9px;top:449.64px;font-size:7px;color:#333;font-weight:bold;">4</div>
<div class="t" style="left:26.6px;top:448.29px;font-size:10.0px;color:#444;font-weight:normal;transform:scale(0.4369,0.4400);transform-origin:0 0;">Виставки за кордоном</div>
<div class="t" style="left:26.6px;top:453.81px;font-size:10.0px;color:#555;font-weight:normal;transform:scale(0.2618,0.2900);transform-origin:0 0;">Ювелірний салон, Женева, Швейцарія, 2019 р.</div>
<div class="t" style="left:26.6px;top:457.81px;font-size:10.0px;color:#555;font-weight:normal;transform:scale(0.3467,0.3100);transform-origin:0 0;">Baselworld, Базель, Швейцарія, 2019 р.</div>
<div class="a" style="left:26px;top:461px;width:116px;height:17px;background:#1e8a86;"></div>
<div class="a" style="left:29.6px;top:463px;width:49.4px;height:15px;background:#3cb8ef;"></div>
<div class="a" style="left:46.7px;top:463px;width:19.7px;height:15px;background:#0c2a78;"></div>
<div class="a" style="left:52px;top:466px;width:9px;height:9px;border-radius:5px;background:radial-gradient(circle,#e8f4ff 0%,#58a8f0 50%,#0c2a78 100%)"></div>
<svg class="a" style="left:84px;top:464px" width="54" height="14" viewBox="0 0 54 14"><rect width="54" height="14" fill="#e4e0da"/><path d="M0 0H54V3C40 3 18 4 0 9z" fill="#6a6864"/><path d="M0 9C18 4 40 3 54 3" stroke="#fafaf8" stroke-width="1.6" fill="none"/><rect x="26" y="0" width="1.5" height="5" fill="#ccc"/><path d="M0 10 H54 V14 H0z" fill="#c8c0b4"/><rect x="6" y="11" width="4" height="3" fill="#f4f0e0"/></svg>
<div class="a" style="left:0px;top:478px;width:161px;height:10px;background:#f5f6fa;"></div>
<svg class="a" style="left:74px;top:481px;" width="9" height="7" viewBox="0 0 9 7" fill="none" stroke="#333" stroke-width="1.2"><path d="M4.5 0v7M0 4h9"/></svg>
<div class="a" style="left:162px;top:84px;width:769px;height:394px;background:#f5f6fa;"></div>
<div class="a" style="left:922px;top:84px;width:8px;height:394px;background:#f5f6fa;"></div>
<div class="a" style="left:922px;top:446px;width:8px;height:32px;background:#ebebef;"></div>
<svg class="a" style="left:923.5px;top:449px;" width="5" height="6" viewBox="0 0 5 6" fill="none" stroke="#888" stroke-width="0.9"><path d="M0.5 2.5L2.5 0.5 4.5 2.5M0.5 5L2.5 3 4.5 5"/></svg>
<svg class="a" style="left:923.5px;top:460px;" width="5" height="6" viewBox="0 0 5 6" fill="none" stroke="#888" stroke-width="0.9"><path d="M0.5 1L2.5 3 4.5 1M0.5 3.5L2.5 5.5 4.5 3.5"/></svg>
<div class="a" style="left:930px;top:84px;width:17px;height:404px;background:#f5f6fa;"></div>
<div class="a" style="left:932px;top:472px;width:15px;height:16px;background:#fcfcfd;border-left:1px solid #e2e2e6;border-top:1px solid #e2e2e6"></div>
<div class="t" style="left:936px;top:482.14px;font-size:7px;color:#666;font-weight:normal;">оо</div>
<div class="a" style="left:162px;top:478px;width:769px;height:10px;background:#e9e8ee;"></div>
<svg class="a" style="left:166px;top:482px;" width="10" height="7" viewBox="0 0 10 7" fill="none" stroke="#333" stroke-width="1.1"><path d="M0 0.5h9.5M0 3.5h9.5M0 6.5h9.5"/></svg>
<div class="t" style="left:181.4px;top:483.56px;font-size:7.8px;color:#3a3a3a;font-weight:normal;transform:scale(1.0226,1.0000);transform-origin:0 0;">Заметки к слайду</div>
<div class="a" id="slide" style="left:296px;top:97px;width:491px;height:368px;background:linear-gradient(90deg,rgb(25,203,105) 0%,rgb(24,196,112) 21%,rgb(20,180,118) 41.5%,rgb(17,155,122) 62%,rgb(14,142,122) 72%,rgb(10,122,122) 82%,rgb(8,105,122) 92.5%,rgb(5,88,125) 100%);box-shadow:0 0 2px rgba(0,0,0,.12)">
  <div class="stxt" style="top:81px">МІСЬКЕ МЕТОДИЧНЕ ОБ’ЄДНАННЯ</div>
  <div class="stxt" style="top:101px">ВИКЛАДАЧІВ СПЕЦДИСЦИПЛІН</div>
  <div class="stxt" style="top:122px">СПЕЦІАЛЬНОСТІ «ДИЗАЙН»</div>
  <div class="stxt" style="top:142px">18.11.2021 р.</div>
</div>
<svg class="a" style="left:672px;top:340px;" width="8" height="12" viewBox="0 0 8 12" fill="none" stroke="#111" stroke-width="0.8"><path d="M0.5 0.5v10l2.5-2.5 2 3.5 1.5-.8-2-3.3h3.3z" fill="#fff"/></svg>
<div class="t" style="left:692.7px;top:469.88px;font-size:10.05px;color:#a4a4ab;font-weight:normal;">Активация Windows</div>
<div class="t" style="left:692.7px;top:482.40px;font-size:7.5px;color:#a8a8b0;font-weight:normal;">Чтобы активировать Windows, перейдите в раздел "Параметры".</div>
<div class="a" style="left:829px;top:48px;width:115px;height:397.5px;background:#232323;box-shadow:0 1px 3px rgba(0,0,0,.35)"></div>
<div class="a" style="left:829px;top:48px;width:115px;height:15px;background:#141414;"></div>
<div class="a" style="left:829px;top:63px;width:115px;height:11px;background:linear-gradient(180deg,#121212,#1a1a1a);"></div>
<div class="a" style="left:834px;top:56px;width:6px;height:2px;background:#c8c8c8;"></div>
<div class="a" style="left:848px;top:54px;width:7px;height:4px;background:#c8c8c8;"></div>
<div class="a" style="left:862px;top:52px;width:6px;height:3px;background:#3b8ff0;"></div>
<div class="a" style="left:862px;top:55.5px;width:6px;height:3px;background:#3b8ff0;"></div>
<svg class="a" style="left:875px;top:52px;fill:#d0d0d0" width="8" height="7" viewBox="0 0 8 7" fill="none" stroke="none" stroke-width="0"><rect x="0" y="0" width="2" height="2"/><rect x="3.5" y="0" width="4" height="2"/><rect x="0" y="2.5" width="2" height="2"/><rect x="3.5" y="2.5" width="4" height="2"/><rect x="0" y="5" width="2" height="2"/><rect x="3.5" y="5" width="4" height="2"/></svg>
<svg class="a" style="left:933px;top:52px;" width="9" height="7" viewBox="0 0 9 7" fill="none" stroke="#666" stroke-width="1"><path d="M0 0h4v2h5v5H0z" fill="#d0d0d0" stroke="none"/></svg>
<svg class="a" style="left:884px;top:65px;" width="7" height="4" viewBox="0 0 7 4" fill="none" stroke="#ddd" stroke-width="1.2"><path d="M0.5 3.5L3.5 0.8 6.5 3.5"/></svg>
<div class="t" style="left:855px;top:89.72px;font-size:8.5px;color:#f2f2f2;font-weight:bold;transform:scale(0.8770,1.0000);transform-origin:0 0;">Наталия&nbsp; Проко...</div>
<div class="a" style="left:833px;top:116px;width:6px;height:8px;background:#a83a3a;border-radius:1px"></div>
<svg class="a" style="left:833px;top:116px;" width="6" height="8" viewBox="0 0 6 8" fill="none" stroke="#f0b0b0" stroke-width="0.7"><path d="M2 1.2h2v3h-2z M1.2 3.8c0 1.5.8 2.2 1.8 2.2s1.8-.7 1.8-2.2M3 6v1.3M1 7L5.2 1" /></svg>
<svg class="a" style="left:831px;top:126px" width="112" height="63" viewBox="0 0 112 63">
<defs>
<pattern id="st" width="4.5" height="4.5" patternUnits="userSpaceOnUse" patternTransform="rotate(-58)"><rect width="4.5" height="1.6" fill="rgba(225,230,238,.75)"/></pattern>
<linearGradient id="bg1" x1="0" x2="1" y1="0" y2="0"><stop offset="0" stop-color="#262c36"/><stop offset=".45" stop-color="#2e3642"/><stop offset=".75" stop-color="#8a909a"/><stop offset="1" stop-color="#b4b8c0"/></linearGradient>
<radialGradient id="hair" cx=".5" cy=".55" r=".6"><stop offset="0" stop-color="#e03a22"/><stop offset="1" stop-color="#b82a1a"/></radialGradient>
</defs>
<rect width="112" height="63" fill="url(#bg1)"/>
<path d="M30 63 L62 0 H112 V63z" fill="url(#st)"/>
<path d="M0 45 L14 15 H20 L3 50z" fill="url(#st)" opacity=".6"/>
<rect x="6" y="0" width="18" height="2.2" fill="#eef1f4"/>
<rect x="79" y="0" width="18" height="2.2" fill="#eef1f4"/>
<rect x="28" y="32" width="12" height="2.5" fill="#e4e8ee"/>
<rect x="14" y="43" width="30" height="9" fill="#4a5672" opacity=".8"/>
<path d="M45 26 C44 48 50 62 62 63 H80 C85 58 87 46 85 26z" fill="#d9ab9c"/><path d="M45 40 C46 52 50 60 56 63 H50 C46 56 44 48 45 40z" fill="#b88878"/>
<path d="M50 46.5 h9 M68 46.5 h9" stroke="#7a5650" stroke-width="2" opacity=".8"/>
<path d="M60 56 h10" stroke="#b07870" stroke-width="1"/>
<path d="M43 40 C41 28 42 14 50 8 L54 5 L58 7 L62 3 L68 5 L74 2 L78 6 C86 8 90 18 88 28 C88 33 87 36 86 40 L83 33 C78 30 70 29 62 31 C56 31 50 33 47 39z" fill="url(#hair)"/>

<rect x="70" y="54" width="9" height="9" rx="3" fill="#e8c8b8"/>
<path d="M82 63 C84 58 92 56 100 60 V63z" fill="#c8a060"/>
</svg>
<div class="a" style="left:833px;top:179px;width:66px;height:9.5px;background:rgba(30,30,30,.7);"></div>
<div class="a" style="left:833px;top:179.5px;width:6px;height:8px;background:#a83a3a;border-radius:1px"></div>
<svg class="a" style="left:833px;top:179.5px;" width="6" height="8" viewBox="0 0 6 8" fill="none" stroke="#f0b0b0" stroke-width="0.7"><path d="M2 1.2h2v3h-2z M1.2 3.8c0 1.5.8 2.2 1.8 2.2s1.8-.7 1.8-2.2M3 6v1.3M1 7L5.2 1" /></svg>
<div class="t" style="left:841.8px;top:180.63px;font-size:6.6px;color:#fff;font-weight:normal;transform:scale(0.9514,1.0000);transform-origin:0 0;">Милана Вороненко</div>
<svg class="a" style="left:831px;top:190px" width="112" height="63" viewBox="0 0 112 63">
<defs><linearGradient id="bg2" x1="0" x2="1" y1="0" y2="1"><stop offset="0" stop-color="#cacacd"/><stop offset=".5" stop-color="#cfcfd2"/><stop offset="1" stop-color="#c2c2c6"/></linearGradient></defs>
<rect width="112" height="63" fill="url(#bg2)"/>
<path d="M18 56 C20 50 26 48 32 49 L33 45 L35 50 C40 52 42 58 40 63 H18z" fill="#6a4a34"/>
<path d="M40 63 C44 56 50 52 56 50 H90 C96 52 100 58 101 63z" fill="#a82a30"/>
<path d="M49 60 C50 46 56 22 66 13 C74 8 86 10 92 18 C97 26 99 40 97 54 L93 56 L91 40 C86 35 74 35 66 40 L60 46 L56 60z" fill="#2d2629"/>
<path d="M60 44 C66 37 80 35 89 38 C93 44 94 50 92 56 C89 62 80 63 72 63 C64 62 58 56 60 44z" fill="#e8d0c8"/>
<path d="M74 56 h8" stroke="#a88a84" stroke-width="0.9"/>
<path d="M68 45 h6 M80 44 h6" stroke="#8a6a66" stroke-width="0.9"/>
<rect x="70" y="54" width="8" height="9" rx="3" fill="#dcbcb0"/>
</svg>
<div class="a" style="left:833px;top:243.5px;width:63px;height:9.3px;background:rgba(40,40,40,.7);"></div>
<div class="a" style="left:833px;top:244.5px;width:6px;height:8px;background:#a83a3a;border-radius:1px"></div>
<svg class="a" style="left:833px;top:244.5px;" width="6" height="8" viewBox="0 0 6 8" fill="none" stroke="#f0b0b0" stroke-width="0.7"><path d="M2 1.2h2v3h-2z M1.2 3.8c0 1.5.8 2.2 1.8 2.2s1.8-.7 1.8-2.2M3 6v1.3M1 7L5.2 1" /></svg>
<div class="t" style="left:841.8px;top:245.03px;font-size:6.6px;color:#fff;font-weight:normal;transform:scale(0.9805,1.0000);transform-origin:0 0;">Олена Сапоненко</div>
<svg class="a" style="left:867px;top:265px" width="40" height="40" viewBox="0 0 40 40">
<defs><linearGradient id="bg3" x1="0" x2="1" y1="0" y2="0"><stop offset="0" stop-color="#8a8a8a"/><stop offset=".35" stop-color="#9c9c9c"/><stop offset=".7" stop-color="#c4c4c4"/><stop offset="1" stop-color="#e2e2e2"/></linearGradient></defs>
<rect width="40" height="40" fill="url(#bg3)"/>
<rect x="28" y="0" width="12" height="12" fill="#ececec"/>
<rect x="14" y="0" width="4" height="10" fill="#6a6a6a" opacity=".6"/>
<path d="M6 36 C4 24 6 10 14 6 C20 4 26 6 28 12 L24 14 C18 12 14 16 12 24 L10 36z" fill="#262626"/>
<path d="M14 14 C18 10 26 10 29 16 C31 22 30 30 26 33 C22 34 17 31 15 26z" fill="#cfcfcf"/>
<path d="M17 20 h4 M23 20 h4" stroke="#555" stroke-width="1.2"/>
<path d="M21 27 h4" stroke="#777" stroke-width="1"/>
<path d="M10 36 C8 28 10 22 13 20 C16 22 20 28 22 34 L20 40 H10z" fill="#d6d6d6"/>
<path d="M0 40 V34 C8 32 16 32 24 34 C30 34 36 34 40 36 V40z" fill="#eaeaea"/>
</svg>
<div class="a" style="left:830px;top:307px;width:56px;height:10px;background:#2a2a2a;"></div>
<div class="t" style="left:832.6px;top:308.83px;font-size:6.6px;color:#fff;font-weight:normal;transform:scale(1.0030,1.0000);transform-origin:0 0;">Мария Иваненко</div>
<div class="a" style="left:830px;top:317.5px;width:113px;height:1px;background:#2e2e2e;"></div>
<div class="a" style="left:867px;top:329px;width:40px;height:40.5px;background:#ad45c6;"></div>
<div class="t" style="left:881px;top:340.90px;font-size:17.5px;color:#f4e8f8;font-weight:bold;transform:scale(0.8941,1.0000);transform-origin:0 0;">H</div>
<div class="a" style="left:833px;top:371px;width:47px;height:10px;background:#2a2a2a;"></div>
<div class="a" style="left:833px;top:372px;width:6px;height:8px;background:#a83a3a;border-radius:1px"></div>
<svg class="a" style="left:833px;top:372px;" width="6" height="8" viewBox="0 0 6 8" fill="none" stroke="#f0b0b0" stroke-width="0.7"><path d="M2 1.2h2v3h-2z M1.2 3.8c0 1.5.8 2.2 1.8 2.2s1.8-.7 1.8-2.2M3 6v1.3M1 7L5.2 1" /></svg>
<div class="t" style="left:841.5px;top:372.63px;font-size:6.6px;color:#fff;font-weight:normal;transform:scale(1.0583,1.0000);transform-origin:0 0;">наталі гупко</div>
<div class="a" style="left:830px;top:381.5px;width:113px;height:1px;background:#2e2e2e;"></div>
<div class="a" style="left:867px;top:392.5px;width:40px;height:40.5px;overflow:hidden;background:#0c5a44">
<svg class="a" style="left:9px;top:16px" width="22" height="26" viewBox="0 0 22 26"><path d="M4 1.5h14V26M5.5 1.5C5.5 14 4.5 22 1 26" fill="none" stroke="#f4f4f4" stroke-width="3.2"/></svg>
</div>
<div class="a" style="left:833px;top:435.5px;width:68px;height:9.9px;background:#2a2a2a;"></div>
<div class="a" style="left:833px;top:436px;width:6px;height:8px;background:#a83a3a;border-radius:1px"></div>
<svg class="a" style="left:833px;top:436px;" width="6" height="8" viewBox="0 0 6 8" fill="none" stroke="#f0b0b0" stroke-width="0.7"><path d="M2 1.2h2v3h-2z M1.2 3.8c0 1.5.8 2.2 1.8 2.2s1.8-.7 1.8-2.2M3 6v1.3M1 7L5.2 1" /></svg>
<div class="t" style="left:841.5px;top:437.13px;font-size:6.6px;color:#fff;font-weight:normal;transform:scale(0.9986,1.0000);transform-origin:0 0;">Бойченко Наталья</div>
</body></html>
